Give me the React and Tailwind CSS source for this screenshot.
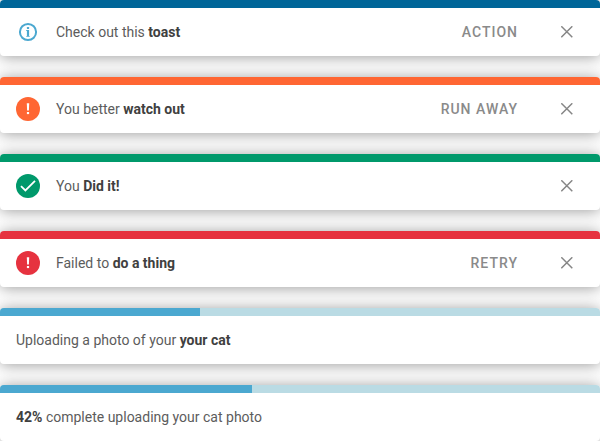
import React from "react";

function InfoIcon() {
  return (
    <svg viewBox="0 0 24 24" className="size-6 shrink-0" fill="none">
      <circle cx="12" cy="12" r="8.1" stroke="#4ba8d0" strokeWidth="2" />
      <rect x="10.9" y="7" width="2.2" height="2" rx="0.5" fill="#4ba8d0" />
      <path d="M10.2 10.1H13.1V16H13.7V16.8H10.3V16H10.9V11H10.2Z" fill="#4ba8d0" />
    </svg>
  );
}

function AlertIcon({ color }) {
  return (
    <svg viewBox="0 0 24 24" className="size-6 shrink-0">
      <circle cx="12" cy="12" r="12" fill={color} />
      <path d="M10.8 6.2H13.2L12.9 13.6H11.1Z" fill="#fff" />
      <rect x="10.9" y="15" width="2.2" height="2.1" fill="#fff" />
    </svg>
  );
}

function CheckIcon() {
  return (
    <svg viewBox="0 0 24 24" className="size-6 shrink-0" fill="none">
      <circle cx="12" cy="12" r="12" fill="#00996b" />
      <path d="M5 12.2L9.4 16.4L19 6.9" stroke="#fff" strokeWidth="1.8" />
    </svg>
  );
}

function CloseIcon() {
  return (
    <svg viewBox="0 0 12 12" className="size-3" fill="none">
      <path d="M0.3 0.3L11.3 11.3M11.3 0.3L0.3 11.3" stroke="#868686" strokeWidth="1.5" />
    </svg>
  );
}

function Toast({ bar, icon, children, action, closable, progress }) {
  return (
    <section className="h-14 shrink-0 overflow-hidden rounded bg-white shadow-[0_1px_15px_rgba(0,0,0,0.4)]">
      <div className={`h-2 ${bar}`}>
        {progress !== undefined && (
          <div className="h-full bg-[#4ba8d0]" style={{ width: `${progress}%` }} />
        )}
      </div>
      <div className="flex h-12 items-center pl-4 pr-[27px]">
        {icon && <span className="mr-4 flex">{icon}</span>}
        <p className="flex-1 text-sm text-[#5c5c5c] [&_b]:font-bold [&_b]:text-[#404040]">{children}</p>
        {action && (
          <button className="mr-[43px] text-sm font-medium tracking-[1px] text-[#8a8a8a]">{action}</button>
        )}
        {closable && (
          <button aria-label="Close"><CloseIcon /></button>
        )}
      </div>
    </section>
  );
}

export default function App() {
  return (
    <main className="flex h-[441px] flex-col gap-[21px] overflow-hidden bg-white font-['Roboto',sans-serif]">
      <Toast bar="bg-[#006699]" icon={<InfoIcon />} action="ACTION" closable>Check out this <b>toast</b></Toast>
      <Toast bar="bg-[#ff6633]" icon={<AlertIcon color="#ff6633" />} action="RUN AWAY" closable>You better <b>watch out</b></Toast>
      <Toast bar="bg-[#00996b]" icon={<CheckIcon />} closable>You <b>Did it!</b></Toast>
      <Toast bar="bg-[#e6323f]" icon={<AlertIcon color="#e6323f" />} action="RETRY" closable>Failed to <b>do a thing</b></Toast>
      <Toast bar="bg-[#badbe4]" progress={33.333}>Uploading a photo of your <b>your cat</b></Toast>
      <Toast bar="bg-[#badbe4]" progress={42}><b>42%</b> complete uploading your cat photo</Toast>
    </main>
  );
}
